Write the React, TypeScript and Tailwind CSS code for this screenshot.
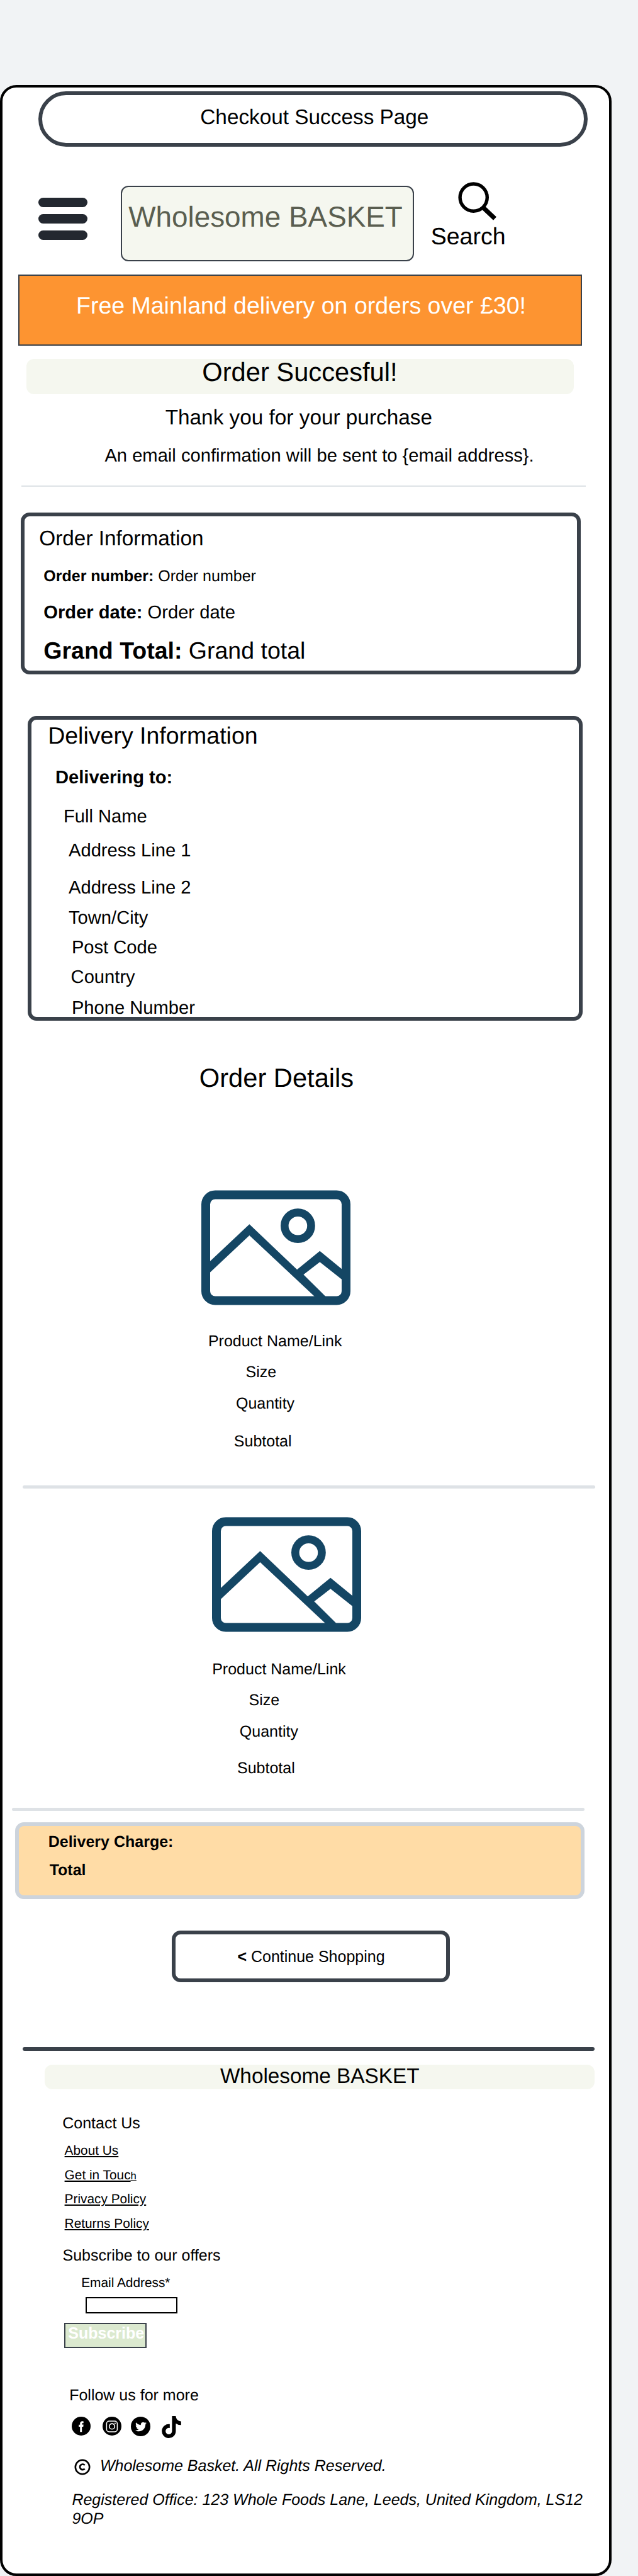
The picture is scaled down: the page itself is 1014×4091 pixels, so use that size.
import React from "react";
import { FaTiktok, FaTwitter } from "react-icons/fa";

function PictureIcon() {
  return (
    <svg className="h-[183px] w-[237px]" viewBox="0 0 237 183" preserveAspectRatio="none" fill="none">
      <rect x="7" y="7.5" width="223" height="168" rx="15" stroke="#144664" strokeWidth="14" />
      <circle cx="153.4" cy="56.7" r="21.1" stroke="#144664" strokeWidth="12.6" />
      <path
        d="M12 114.7 76.4 54.3 152.1 126.3 188.3 96.7 224 126V142.5L188.3 114.3 162.4 134.3 197.5 169H180L76.4 72 12 132.4Z"
        fill="#144664"
      />
    </svg>
  );
}

function SearchIcon() {
  return (
    <svg className="ml-[43px] h-[62px] w-[62px]" viewBox="0 0 62 62" fill="none" stroke="#000">
      <circle cx="24.7" cy="24.6" r="21.6" strokeWidth="5.4" />
      <path d="M40.5 41.2 58.5 58.2" strokeWidth="7.2" />
    </svg>
  );
}

function FacebookIcon() {
  return (
    <svg className="mt-px ml-[110px] h-[30px] w-[30px]" viewBox="0 0 30 30">
      <circle cx="15" cy="15" r="15" />
      <path
        fill="#fff"
        d="M13.2 24.3V16h-2v-3.2h2v-1.9c0-2.4 1.3-3.7 3.6-3.7.7 0 1.5.1 1.9.2v2.9h-1.2c-1 0-1.3.5-1.3 1.2v1.1h2.5l-.4 3.4h-2.1v8.3z"
      />
    </svg>
  );
}

function InstagramIcon() {
  return (
    <svg className="mt-px ml-[19px] h-[30px] w-[30px]" viewBox="0 0 30 30" fill="none" stroke="#fff">
      <circle cx="15" cy="15" r="15" fill="#000" stroke="none" />
      <rect x="6.4" y="7" width="17" height="17" rx="4" strokeWidth="1.5" />
      <circle cx="15" cy="15.4" r="4.3" strokeWidth="1.6" />
      <circle cx="19.9" cy="10.5" r="1.1" fill="#fff" stroke="none" />
    </svg>
  );
}

function CopyrightIcon() {
  return (
    <svg className="mt-[3px] ml-[114px] h-[26px] w-[26px]" viewBox="0 0 26 26" fill="none" stroke="#000">
      <circle cx="13" cy="13" r="11.2" strokeWidth="2.6" />
      <path d="M16.6 10.1A4.3 4.3 0 1 0 16.6 15.6" strokeWidth="2.6" />
    </svg>
  );
}

export default function App() {
  return (
    <div className="h-[4091px] w-[1014px] overflow-hidden bg-[#f1f3f5] pt-[135px] font-['Liberation_Sans',Arial,sans-serif] whitespace-nowrap text-black [text-rendering:geometricPrecision]">
      <main className="flow-root h-[3956px] w-[972px] rounded-[26px] border-4 border-black bg-white">
        <div className="mt-[6px] ml-[57px] h-[88px] w-[873px] rounded-full border-[6px] border-[#3a414a] pt-[17px] pl-[251.3px] text-[33.33px] leading-[38px]">
          Checkout Success Page
        </div>

        <header className="mt-[56px] flex h-[126px] items-start">
          <div className="mt-[25px] ml-[57px] flex w-[78px] flex-col gap-[11px]">
            <span className="h-[15px] rounded-full bg-[#232830]" />
            <span className="h-[15px] rounded-full bg-[#232830]" />
            <span className="h-[15px] rounded-full bg-[#232830]" />
          </div>
          <div className="mt-[6px] ml-[53px] h-[120px] w-[466px] rounded-[12px] border-2 border-[#3a414a] bg-[#f5f7ef] pt-[22px] pl-[10.3px] text-[45.83px] leading-[51px] text-[#5a5e50]">
            Wholesome BASKET
          </div>
          <div className="ml-[26.7px] flex flex-col">
            <SearchIcon />
            <span className="mt-[3px] text-[37.5px] leading-[42px]">Search</span>
          </div>
        </header>

        <div className="mt-[21px] ml-[25px] h-[113px] w-[896px] border-2 border-[#3a414a] bg-[#fd9431] pt-[26px] pl-[90px] text-[37.5px] leading-[42px] text-white">
          Free Mainland delivery on orders over £30!
        </div>

        <div className="mt-[21px] ml-[37.5px] flex h-[56px] w-[870.5px] items-start rounded-[12px] bg-[#f5f7ef] pl-[279.8px]">
          <h1 className="-mt-[3px] text-[41.67px] leading-[47px]">Order Succesful!</h1>
        </div>
        <p className="mt-[19px] ml-[258.7px] text-[33.33px] leading-[38px]">Thank you for your purchase</p>
        <p className="mt-[25px] ml-[162.4px] text-[29.17px] leading-[33px]">
          An email confirmation will be sent to {"{email address}"}.
        </p>
        <div className="mt-[30px] ml-[30px] h-[2px] w-[897px] bg-[#dee2e6]" />

        <section className="mt-[41px] ml-[29px] h-[257px] w-[889.5px] rounded-[14px] border-[6px] border-[#3a414a] pt-[17px] pl-[30.3px]">
          <h2 className="-ml-[7px] text-[33.33px] leading-[38px]">Order Information</h2>
          <p className="mt-[26px] text-[25px] leading-[28px]">
            <b>Order number:</b> Order number
          </p>
          <p className="mt-[28px] text-[29.17px] leading-[33px]">
            <b>Order date:</b> Order date
          </p>
          <p className="mt-[22px] text-[37.5px] leading-[42px]">
            <b>Grand Total:</b> Grand total
          </p>
        </section>

        <section className="mt-[66px] ml-[40px] h-[484px] w-[882px] rounded-[14px] border-[6px] border-[#3a414a] pt-[4px] pl-[26.2px] text-[29.17px] leading-[33px]">
          <h2 className="text-[37.5px] leading-[42px]">Delivery Information</h2>
          <p className="mt-[30px] ml-[11.8px] font-bold">Delivering to:</p>
          <p className="mt-[29px] ml-[24.8px]">Full Name</p>
          <p className="mt-[21px] ml-[32.8px]">Address Line 1</p>
          <p className="mt-[26px] ml-[32.8px]">Address Line 2</p>
          <p className="mt-[15px] ml-[32.8px]">Town/City</p>
          <p className="mt-[14px] ml-[37.7px]">Post Code</p>
          <p className="mt-[14px] ml-[36.4px]">Country</p>
          <p className="mt-[16px] ml-[37.7px]">Phone Number</p>
        </section>

        <h2 className="mt-[67px] ml-[312.8px] text-[41.67px] leading-[47px]">Order Details</h2>

        <article className="mt-[155px] ml-[316px] text-[25px] leading-[28px]">
          <PictureIcon />
          <p className="mt-[43px] ml-[10.9px]">Product Name/Link</p>
          <p className="mt-[21px] ml-[70.6px]">Size</p>
          <p className="mt-[22px] ml-[55px]">Quantity</p>
          <p className="mt-[32px] ml-[51.8px]">Subtotal</p>
        </article>
        <div className="mt-[56px] ml-[31.5px] h-[5px] w-[910px] rounded-full bg-[#dee2e6]" />

        <article className="mt-[45px] ml-[333px] text-[25px] leading-[28px]">
          <PictureIcon />
          <p className="mt-[45px] ml-[0.2px]">Product Name/Link</p>
          <p className="mt-[21px] ml-[58.6px]">Size</p>
          <p className="mt-[22px] ml-[43.8px]">Quantity</p>
          <p className="mt-[30px] ml-[40px]">Subtotal</p>
        </article>
        <div className="mt-[49px] ml-[14.5px] h-[5px] w-[910.5px] rounded-full bg-[#dee2e6]" />

        <section className="mt-[18px] ml-[20px] h-[122px] w-[905px] rounded-[14px] border-[6px] border-[#cdd4dc] bg-[#ffdca6] pt-[11px] pl-[46.7px] text-[25px] leading-[28px] font-bold">
          <p>Delivery Charge:</p>
          <p className="mt-[17px] ml-[2px]">Total</p>
        </section>

        <button className="mt-[50px] ml-[269px] block h-[82px] w-[442px] rounded-[14px] border-[6px] border-[#3a414a] pb-px pl-[1px] text-center text-[25px] leading-[28px]">
          <b>&lt;</b> Continue Shopping
        </button>

        <footer>
          <div className="mt-[103px] ml-[31.5px] h-[6px] w-[909px] rounded-full bg-[#3a414a]" />
          <div className="mt-[22px] ml-[67px] flex h-[39px] w-[873.5px] items-start rounded-[12px] bg-[#f5f7ef] pl-[278.9px]">
            <h2 className="text-[33.33px] leading-[38px]">Wholesome BASKET</h2>
          </div>

          <h3 className="mt-[40px] ml-[95.2px] text-[25px] leading-[28px]">Contact Us</h3>
          <nav className="mt-[18px] ml-[98.6px] flex flex-col items-start text-[20.83px] leading-[24px]">
            <a className="underline">About Us</a>
            <a className="mt-[15px]">
              <span className="underline">Get in Touc</span>
              <span className="text-[16.67px] leading-none underline">h</span>
            </a>
            <a className="mt-[14px] underline">Privacy Policy</a>
            <a className="mt-[15px] underline">Returns Policy</a>
          </nav>

          <h3 className="mt-[24px] ml-[95.5px] text-[25px] leading-[28px]">Subscribe to our offers</h3>
          <label className="mt-[18px] ml-[125.2px] block text-[20.83px] leading-[24px]">Email Address*</label>
          <div className="mt-[10px] ml-[132px] h-[26px] w-[146px] border-2 border-black" />
          <button className="mt-[15px] ml-[98px] flex h-[40px] w-[131px] items-start border-2 border-[#3a414a] bg-[#dbe9cf] pl-[4.3px] text-[25px] leading-[28px] font-bold text-white">
            Subscribe
          </button>

          <h3 className="mt-[61px] ml-[106.2px] text-[25px] leading-[28px]">Follow us for more</h3>
          <div className="mt-[19px] flex h-[35px] items-start">
            <FacebookIcon />
            <InstagramIcon />
            <span className="mt-px ml-[15px] flex h-[31px] w-[31px] items-center justify-center rounded-full bg-black">
              <FaTwitter className="h-[18px] w-[18px] text-white" />
            </span>
            <FaTiktok className="ml-[18px] h-[35px] w-[31px]" />
          </div>
          <div className="mt-[30px] flex h-[28px] items-start text-[25px] leading-[28px] italic">
            <CopyrightIcon />
            <span className="ml-[14.9px]">Wholesome Basket. All Rights Reserved.</span>
          </div>
          <p className="mt-[26px] ml-[110.4px] w-[830px] text-[25px] leading-[29.5px] whitespace-normal italic">
            Registered Office: 123 Whole Foods Lane, Leeds, United Kingdom, LS12 9OP
          </p>
        </footer>
      </main>
    </div>
  );
}
